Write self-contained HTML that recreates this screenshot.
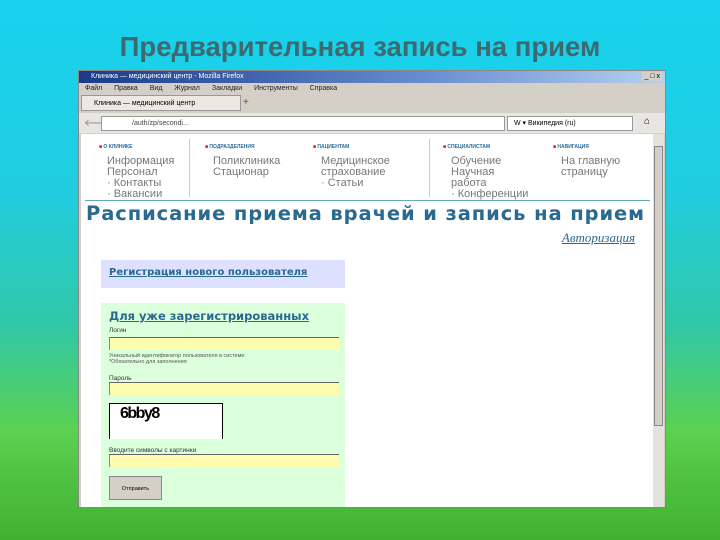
<!DOCTYPE html>
<html><head><meta charset="utf-8"><style>
*{margin:0;padding:0;box-sizing:border-box}
body{width:720px;height:540px;overflow:hidden;position:relative;font-family:"Liberation Sans",sans-serif;
background:linear-gradient(180deg,#18d2ee 0%,#20cde0 35%,#30c8a8 60%,#5cd050 80%,#40b030 100%);}
.t{position:absolute;left:0;width:720px;top:31px;text-align:center;font-size:27.5px;font-weight:bold;color:#3d6a70;}
.w{position:absolute;left:78px;top:70px;width:588px;height:438px;background:#d4d0c8;border:1px solid #888;}
.tb{position:absolute;left:0;top:0;width:586px;height:12px;background:linear-gradient(90deg,#1a3a8a,#6a8ed0 60%,#b6d0f0);color:#fff;font-size:7px;line-height:12px;padding-left:12px}
.mn{position:absolute;top:14px;left:6px;font-size:7px;color:#222;word-spacing:10px}
.tab{position:absolute;top:24px;left:2px;width:160px;height:16px;background:#ece9e4;border:1px solid #999;font-size:7px;line-height:15px;padding-left:12px}
.nv{position:absolute;top:42px;left:0;width:586px;height:20px;background:#e8e6e2}
.url{position:absolute;top:45px;left:22px;width:404px;height:15px;background:#fff;border:1px solid #999;font-size:7px;line-height:13px;padding-left:30px;color:#444}
.sr{position:absolute;top:45px;left:428px;width:126px;height:15px;background:#fff;border:1px solid #999;font-size:7px;line-height:13px;padding-left:6px}
.ct{position:absolute;top:63px;left:2px;width:572px;height:373px;background:#fff;overflow:hidden}
.sb{position:absolute;top:63px;left:574px;width:11px;height:373px;background:#e4e2dc}
.col{position:absolute;top:8px;font-size:11px;color:#777;line-height:11px}
.col b{display:block;font-size:5px;color:#2a6a9a;margin-bottom:3px;margin-left:-8px}
.col b:before{content:"■ ";color:#d00}
.hr{position:absolute;top:66px;left:4px;width:565px;height:1px;background:#6aa}
.h1{position:absolute;top:68px;left:5px;font-family:"DejaVu Sans",sans-serif;font-size:19.5px;font-weight:bold;color:#2b6a90;letter-spacing:0.9px;white-space:nowrap}
.au{position:absolute;top:96px;right:18px;font-family:"Liberation Serif",serif;font-style:italic;font-size:13px;color:#2b6a90;text-decoration:underline}
.rg{position:absolute;top:126px;left:20px;width:244px;height:28px;background:#dde0ff;font-family:"DejaVu Sans",sans-serif;font-size:10px;font-weight:bold;color:#2b6a90;text-decoration:underline;padding:7px 8px}
.gr{position:absolute;top:169px;left:20px;width:244px;height:210px;background:#dcffdc}
.gr a{position:absolute;left:8px;top:6px;font-family:"DejaVu Sans",sans-serif;font-size:11.5px;font-weight:bold;color:#2b6a90;text-decoration:underline;white-space:nowrap}
.lb{position:absolute;left:8px;font-size:6.5px;color:#333;white-space:nowrap}
.in{position:absolute;left:8px;width:230px;height:13px;background:#fffcb0;border-top:1px solid #666;border-left:1px solid #888}
</style></head><body>
<div class="t">Предварительная запись на прием</div>
<div class="w">
<div class="tb">Клиника — медицинский центр - Mozilla Firefox<span style="position:absolute;right:3px;color:#000;background:#d4d0c8;padding:0 2px;line-height:9px;top:1px">_ □ x</span></div>
<div class="mn">Файл Правка Вид Журнал Закладки Инструменты Справка</div>
<div class="tab">Клиника — медицинский центр</div>
<div style="position:absolute;top:26px;left:164px;font-size:10px;color:#555">+</div>
<div class="nv"></div>
<div style="position:absolute;top:46px;left:5px;font-size:10px;color:#888">🡐</div>
<div class="url">/auth/zp/secondi...</div>
<div class="sr">W ▾ Википедия (ru)</div>
<div style="position:absolute;top:45px;left:565px;font-size:10px">⌂</div>
<div class="ct">
<div class="col" style="left:26px"><b>О КЛИНИКЕ</b>Информация<br>Персонал<br>· Контакты<br>· Вакансии</div>
<div style="position:absolute;left:108px;top:5px;width:1px;height:58px;background:#ccc"></div>
<div class="col" style="left:132px"><b>ПОДРАЗДЕЛЕНИЯ</b>Поликлиника<br>Стационар</div>
<div class="col" style="left:240px"><b>ПАЦИЕНТАМ</b>Медицинское<br>страхование<br>· Статьи</div>
<div style="position:absolute;left:348px;top:5px;width:1px;height:58px;background:#ccc"></div>
<div class="col" style="left:370px"><b>СПЕЦИАЛИСТАМ</b>Обучение<br>Научная<br>работа<br>· Конференции</div>
<div class="col" style="left:480px"><b>НАВИГАЦИЯ</b>На главную<br>страницу</div>
<div class="hr"></div>
<div class="h1">Расписание приема врачей и запись на прием</div>
<div class="au">Авторизация</div>
<div class="rg">Регистрация нового пользователя</div>
<div class="gr"><a>Для уже зарегистрированных</a>
<div class="lb" style="top:24px">Логин</div><div class="in" style="top:34px"></div>
<div class="lb" style="top:50px;font-size:5.5px;color:#555">Уникальный идентификатор пользователя в системе<br>*Обязательно для заполнения</div>
<div class="lb" style="top:72px">Пароль</div><div class="in" style="top:79px"></div>
<div style="position:absolute;left:8px;top:100px;width:114px;height:36px;border:1px solid #000;border-bottom:none;background:#fff;font-weight:bold;font-size:16px;padding:1px 10px;letter-spacing:-1.5px">6bby8</div>
<div class="lb" style="top:144px">Вводите символы с картинки</div><div class="in" style="top:151px"></div>
<div style="position:absolute;left:8px;top:173px;width:53px;height:24px;background:#d4d0c8;border:1px solid #888;font-size:5.5px;text-align:center;line-height:24px">Отправить</div>
</div>
</div>
<div class="sb"><div style="position:absolute;top:12px;left:1px;width:9px;height:280px;background:#d4d0c8;border:1px solid #888"></div></div>
</div>
</body></html>
